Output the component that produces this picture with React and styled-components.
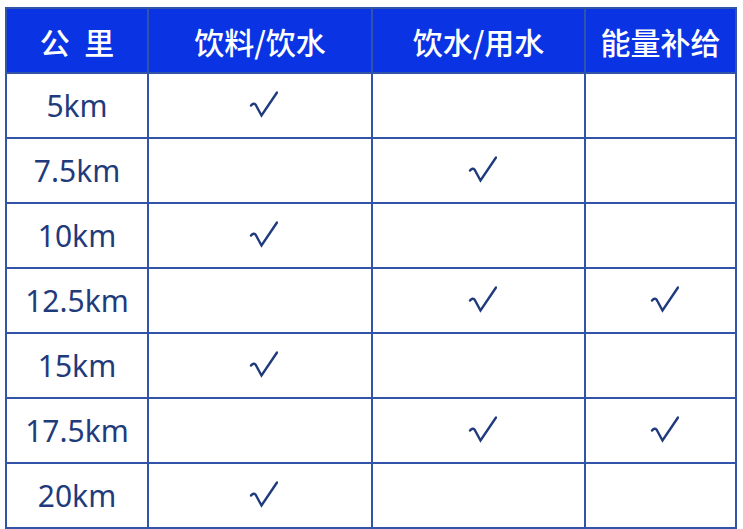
import styled, { createGlobalStyle } from 'styled-components';

const GlobalStyle = createGlobalStyle`
  html, body {
    margin: 0;
    padding: 0;
    background: #ffffff;
  }
  body {
    font-family: 'Noto Sans', 'Noto Sans CJK SC', sans-serif;
  }
`;

const rows = [
  { km: '5km', marks: [true, false, false] },
  { km: '7.5km', marks: [false, true, false] },
  { km: '10km', marks: [true, false, false] },
  { km: '12.5km', marks: [false, true, true] },
  { km: '15km', marks: [true, false, false] },
  { km: '17.5km', marks: [false, true, true] },
  { km: '20km', marks: [true, false, false] },
];

const headers = ['公 里', '饮料/饮水', '饮水/用水', '能量补给'];

function Check() {
  return (
    <CheckIcon viewBox="0 0 30 28" aria-label="✓">
      <path
        d="M3 15.5 Q5.5 12.5 7.5 14.5 L13.5 25.5 L29 2.5"
        fill="none"
        stroke="#1f3b7c"
        strokeWidth="2.4"
        strokeLinecap="round"
        strokeLinejoin="miter"
      />
    </CheckIcon>
  );
}

export default function App() {
  return (
    <>
      <GlobalStyle />
      <Page>
        <Grid>
          {headers.map((h) => (
            <HeadCell key={h}>{h}</HeadCell>
          ))}
          {rows.map((row) => (
            <Row key={row.km}>
              <KmCell>{row.km}</KmCell>
              {row.marks.map((m, i) => (
                <Cell key={i}>{m && <Check />}</Cell>
              ))}
            </Row>
          ))}
        </Grid>
      </Page>
    </>
  );
}

const Page = styled.main`
  padding: 7px 0 0 5px;
`;

const Grid = styled.div`
  display: grid;
  grid-template-columns: 140px 222px 211px 149px;
  grid-auto-rows: 63px;
  gap: 2px;
  padding: 2px;
  width: max-content;
  background: #3153a8;
`;

const Row = styled.div`
  display: contents;
`;

const HeadCell = styled.div`
  display: flex;
  align-items: center;
  justify-content: center;
  background: #0a34e3;
  color: #ffffff;
  font-family: 'Noto Sans CJK SC', sans-serif;
  font-size: 30px;
  font-weight: 500;
  white-space: pre;
  word-spacing: 8px;
`;

const Cell = styled.div`
  display: flex;
  align-items: center;
  justify-content: center;
  background: #ffffff;
`;

const KmCell = styled(Cell)`
  color: #1f3b7c;
  font-family: 'Noto Sans', 'Noto Sans CJK SC', sans-serif;
  font-size: 30px;
`;

const CheckIcon = styled.svg`
  width: 30px;
  height: 28px;
  margin: 0 0 4px 6px;
`;
